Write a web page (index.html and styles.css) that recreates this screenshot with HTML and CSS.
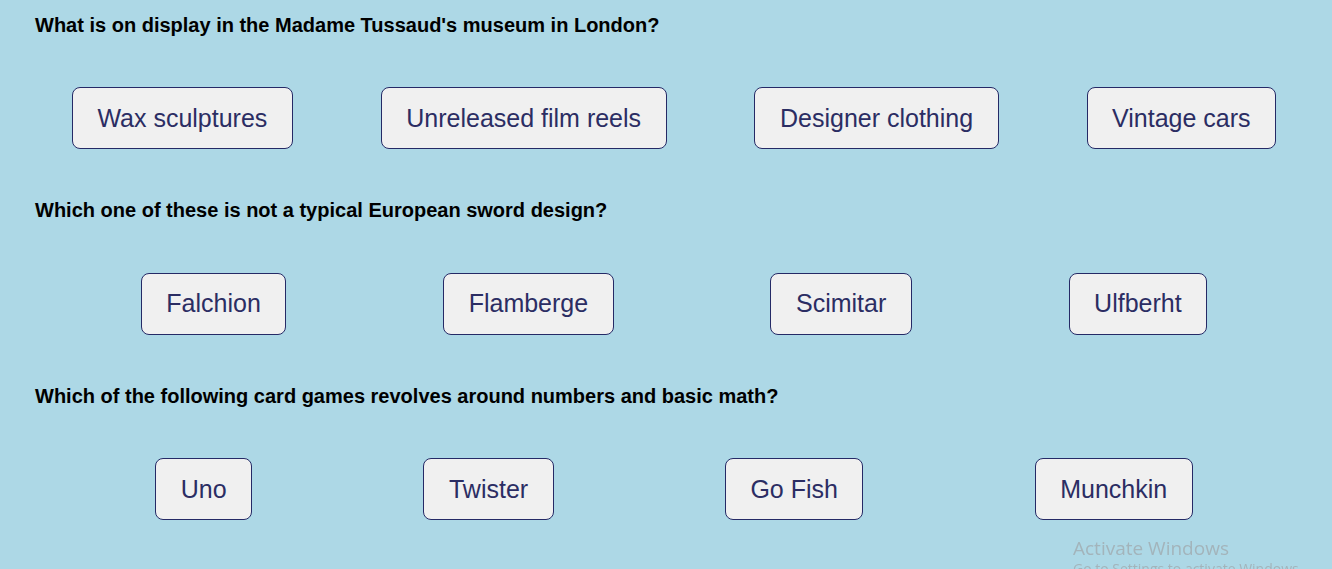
FILE: index.html
```html
<!DOCTYPE html>
<html lang="en">
<head>
<meta charset="utf-8">
<title>Quiz</title>
<link rel="stylesheet" href="styles.css">
</head>
<body>
<main class="quiz">
  <section class="question">
    <h3 class="question-text">What is on display in the Madame Tussaud's museum in London?</h3>
    <div class="answers">
      <button class="answer">Wax sculptures</button>
      <button class="answer">Unreleased film reels</button>
      <button class="answer">Designer clothing</button>
      <button class="answer">Vintage cars</button>
    </div>
  </section>
  <section class="question">
    <h3 class="question-text">Which one of these is not a typical European sword design?</h3>
    <div class="answers">
      <button class="answer">Falchion</button>
      <button class="answer">Flamberge</button>
      <button class="answer">Scimitar</button>
      <button class="answer">Ulfberht</button>
    </div>
  </section>
  <section class="question">
    <h3 class="question-text">Which of the following card games revolves around numbers and basic math?</h3>
    <div class="answers">
      <button class="answer">Uno</button>
      <button class="answer">Twister</button>
      <button class="answer">Go Fish</button>
      <button class="answer">Munchkin</button>
    </div>
  </section>
</main>
<div class="watermark">
  <div class="watermark-title">Activate Windows</div>
  <div class="watermark-sub">Go to Settings to activate Windows.</div>
</div>
</body>
</html>
```

FILE: styles.css
```css
html, body {
  margin: 0;
  padding: 0;
  background: #add8e6;
  overflow: hidden;
}

body {
  font-family: "Liberation Sans", Arial, sans-serif;
  height: 569px;
}

.quiz {
  padding-top: 13.5px;
}

.question-text {
  margin: 0 0 50.5px 35px;
  font-size: 20px;
  line-height: 23px;
  font-weight: bold;
  color: #000;
}

.answers {
  display: flex;
  justify-content: space-evenly;
  margin-bottom: 50px;
}

.answer {
  margin: 0 16px 0 32px;
  font-family: "Liberation Sans", Arial, sans-serif;
  font-size: 25px;
  line-height: 29px;
  padding: 15.5px 24.5px;
  background: #f0f0f0;
  color: #2b2d63;
  border: 1px solid #252a66;
  border-radius: 8px;
}

.watermark {
  position: fixed;
  left: 1073px;
  top: 536px;
  font-family: "Open Sans", "Noto Sans", sans-serif;
  color: #a3b4bb;
  white-space: nowrap;
}

.watermark-title {
  font-size: 19px;
  line-height: 24px;
}

.watermark-sub {
  font-size: 14px;
  line-height: 18px;
}
```
